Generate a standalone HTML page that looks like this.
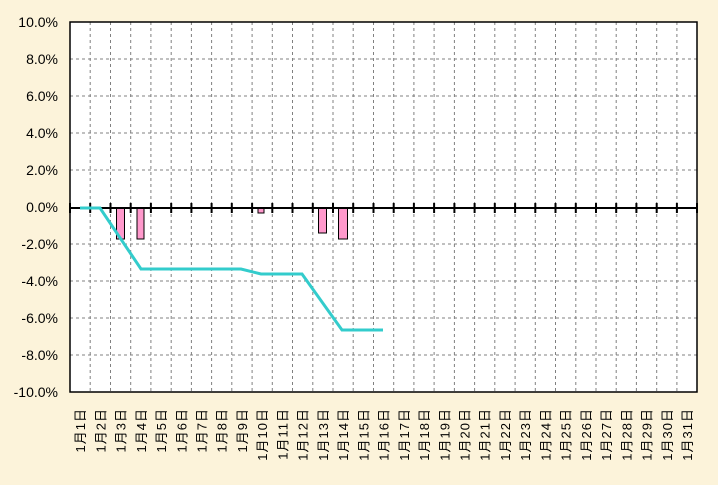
<!DOCTYPE html>
<html><head><meta charset="utf-8"><style>
html,body{margin:0;padding:0;background:#fcf3da;}
svg{display:block}
text{font-family:"Liberation Sans","Noto Sans CJK JP",sans-serif;}
</style></head><body>
<svg width="718" height="485" viewBox="0 0 718 485" xmlns="http://www.w3.org/2000/svg">
<rect width="718" height="485" fill="#fcf3da"/>
<rect x="70" y="22" width="627" height="370" fill="#fff"/>
<g stroke="#808080" stroke-dasharray="3,3" stroke-width="1">
<path d="M70 59H697M70 96H697M70 133H697M70 170H697M70 244H697M70 281H697M70 318H697M70 355H697"/>
<path d="M90.2 22V392M110.5 22V392M130.7 22V392M150.9 22V392M171.2 22V392M191.4 22V392M211.6 22V392M231.8 22V392M252.1 22V392M272.3 22V392M292.5 22V392M312.8 22V392M333 22V392M353.2 22V392M373.5 22V392M393.7 22V392M413.9 22V392M434.1 22V392M454.4 22V392M474.6 22V392M494.8 22V392M515.1 22V392M535.3 22V392M555.5 22V392M575.8 22V392M596 22V392M616.2 22V392M636.4 22V392M656.7 22V392M676.9 22V392"/>
</g>
<g fill="#ff99cc" stroke="#000" stroke-width="1">
<rect x="116.5" y="208" width="8" height="31"/>
<rect x="137" y="208" width="7" height="31"/>
<rect x="258" y="208" width="6" height="5"/>
<rect x="318.5" y="208" width="8" height="25"/>
<rect x="338.5" y="208" width="9" height="31"/>
</g>
<g stroke="#000" stroke-width="2">
<path d="M70 208H697"/>
<path d="M70 203V213M90.2 203V213M110.5 203V213M130.7 203V213M150.9 203V213M171.2 203V213M191.4 203V213M211.6 203V213M231.8 203V213M252.1 203V213M272.3 203V213M292.5 203V213M312.8 203V213M333 203V213M353.2 203V213M373.5 203V213M393.7 203V213M413.9 203V213M434.1 203V213M454.4 203V213M474.6 203V213M494.8 203V213M515.1 203V213M535.3 203V213M555.5 203V213M575.8 203V213M596 203V213M616.2 203V213M636.4 203V213M656.7 203V213M676.9 203V213M697 203V213"/>
</g>
<polyline points="80,208 100,208 141,269 241,269 261,274 302,274 342,330 383,330" fill="none" stroke="#33cccc" stroke-width="3"/>
<rect x="70" y="22" width="627" height="370" fill="none" stroke="#000" stroke-width="1.5"/>
<g font-size="14" text-anchor="end" fill="#000">
<text x="58" y="27">10.0%</text><text x="58" y="64">8.0%</text><text x="58" y="101">6.0%</text><text x="58" y="138">4.0%</text><text x="58" y="175">2.0%</text><text x="58" y="212">0.0%</text><text x="58" y="249">-2.0%</text><text x="58" y="286">-4.0%</text><text x="58" y="323">-6.0%</text><text x="58" y="360">-8.0%</text><text x="58" y="397">-10.0%</text>
</g>
<g font-size="13" text-anchor="end" fill="#000" letter-spacing="1">
<text transform="translate(85,408) rotate(-90)">1月1日</text>
<text transform="translate(105.4,408) rotate(-90)">1月2日</text>
<text transform="translate(125.6,408) rotate(-90)">1月3日</text>
<text transform="translate(145.8,408) rotate(-90)">1月4日</text>
<text transform="translate(166,408) rotate(-90)">1月5日</text>
<text transform="translate(186.3,408) rotate(-90)">1月6日</text>
<text transform="translate(206.5,408) rotate(-90)">1月7日</text>
<text transform="translate(226.7,408) rotate(-90)">1月8日</text>
<text transform="translate(247,408) rotate(-90)">1月9日</text>
<text transform="translate(267.2,408) rotate(-90)">1月10日</text>
<text transform="translate(287.4,408) rotate(-90)">1月11日</text>
<text transform="translate(307.7,408) rotate(-90)">1月12日</text>
<text transform="translate(327.9,408) rotate(-90)">1月13日</text>
<text transform="translate(348.1,408) rotate(-90)">1月14日</text>
<text transform="translate(368.3,408) rotate(-90)">1月15日</text>
<text transform="translate(388.6,408) rotate(-90)">1月16日</text>
<text transform="translate(408.8,408) rotate(-90)">1月17日</text>
<text transform="translate(429,408) rotate(-90)">1月18日</text>
<text transform="translate(449.3,408) rotate(-90)">1月19日</text>
<text transform="translate(469.5,408) rotate(-90)">1月20日</text>
<text transform="translate(489.7,408) rotate(-90)">1月21日</text>
<text transform="translate(510,408) rotate(-90)">1月22日</text>
<text transform="translate(530.2,408) rotate(-90)">1月23日</text>
<text transform="translate(550.4,408) rotate(-90)">1月24日</text>
<text transform="translate(570.6,408) rotate(-90)">1月25日</text>
<text transform="translate(590.9,408) rotate(-90)">1月26日</text>
<text transform="translate(611.1,408) rotate(-90)">1月27日</text>
<text transform="translate(631.3,408) rotate(-90)">1月28日</text>
<text transform="translate(651.6,408) rotate(-90)">1月29日</text>
<text transform="translate(671.8,408) rotate(-90)">1月30日</text>
<text transform="translate(692,408) rotate(-90)">1月31日</text>
</g>
</svg>
</body></html>
